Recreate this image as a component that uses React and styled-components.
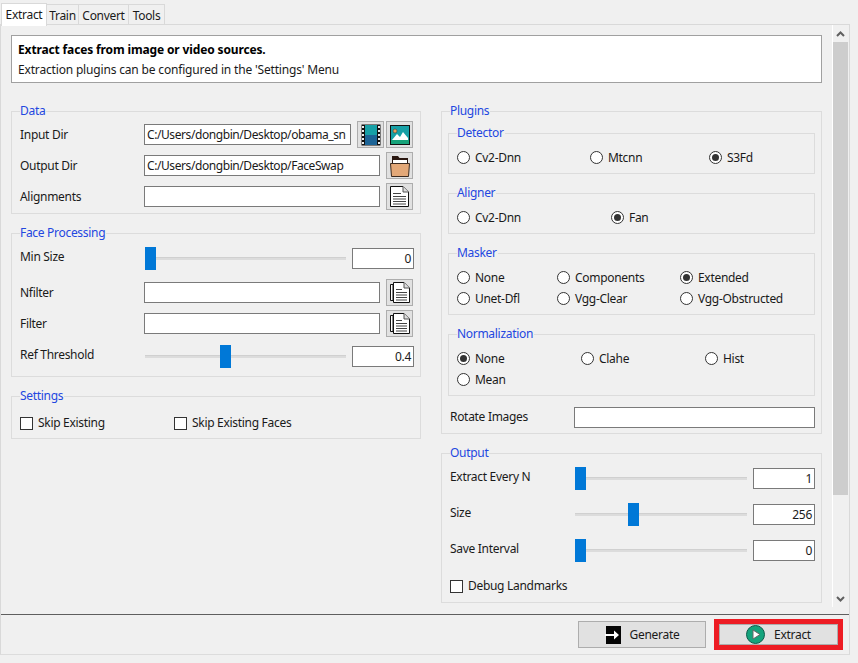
import React from 'react';
import styled, { createGlobalStyle } from 'styled-components';

const GlobalStyle = createGlobalStyle`
  html, body {
    margin: 0;
    padding: 0;
    background: #f0f0f0;
    overflow: hidden;
  }
  * {
    box-sizing: border-box;
  }
`;

const Window = styled.div`
  width: 858px;
  height: 663px;
  background: #f0f0f0;
  color: #1a1a1a;
  font-family: 'Noto Sans', 'Liberation Sans', sans-serif;
  font-size: 12px;
  letter-spacing: -0.3px;
  line-height: 16px;
  display: flex;
  flex-direction: column;
`;

const TabBar = styled.div`
  height: 25px;
  padding: 2px 0 0 1px;
  display: flex;
  align-items: flex-end;
  width: 850px;
  position: relative;
  z-index: 1;
`;

const Tab = styled.div`
  width: ${(p) => p.$width}px;
  height: ${(p) => (p.$active ? 23 : 21)}px;
  margin-bottom: ${(p) => (p.$active ? -1 : 0)}px;
  background: ${(p) => (p.$active ? '#fff' : '#f0f0f0')};
  border: 1px solid #d9d9d9;
  border-bottom: ${(p) => (p.$active ? 'none' : '1px solid #d9d9d9')};
  border-left: ${(p) => (p.$active ? '1px solid #d9d9d9' : 'none')};
  text-align: center;
  line-height: ${(p) => (p.$active ? 22 : 21)}px;
`;

const Pane = styled.div`
  width: 850px;
  height: 631px;
  margin-top: -1px;
  border: 1px solid #d9d9d9;
  border-bottom-color: #dcdcdc;
  display: flex;
  flex-direction: column;
`;

const ScrollArea = styled.div`
  height: 589px;
  display: flex;
`;

const Content = styled.div`
  width: 831px;
  padding: 10px 10px 0;
`;

const Description = styled.div`
  height: 48px;
  background: #fff;
  border: 1px solid #a0a0a0;
  padding: 4px 6px;
  line-height: 20px;
  letter-spacing: -0.17px;
`;

const DescriptionTitle = styled.div`
  font-weight: 700;
  color: #000;
  letter-spacing: -0.14px;
`;

const Columns = styled.div`
  margin-top: 28px;
  display: grid;
  grid-template-columns: 410px 381px;
  column-gap: 20px;
  align-items: start;
`;

const Column = styled.div`
  display: flex;
  flex-direction: column;
  gap: 19px;
`;

const Group = styled.div`
  border: 1px solid #dcdcdc;
  height: ${(p) => p.$height}px;
  padding: 0 ${(p) => p.$pr ?? 7}px 0 ${(p) => p.$pl ?? 8}px;
`;

const GroupTitle = styled.div`
  width: fit-content;
  margin: -9px 0 0 ${(p) => p.$ml ?? 0}px;
  height: 16px;
  background: #f0f0f0;
  color: #2347e0;
  line-height: 16px;
  padding-right: 1px;
`;

const SubGroups = styled.div`
  display: flex;
  flex-direction: column;
  gap: 19px;
  margin: 14px 0 0;
`;

const SubTitle = styled(GroupTitle)`
  margin-left: 8px;
`;

const Row = styled.div`
  display: flex;
  align-items: center;
  height: ${(p) => p.$height ?? 27}px;
  margin-top: ${(p) => p.$mt ?? 0}px;
`;

const Label = styled.div`
  width: 124px;
  flex: none;
  margin-top: ${(p) => p.$shift ?? 0}px;
  color: #1a1a1a;
`;

const RotateLabel = styled(Label)`
  width: 126px;
  padding-left: 2px;
`;

const TextField = styled.div`
  flex: 1;
  min-width: 0;
  height: 21px;
  background: #fff;
  border: 1px solid #7a7a7a;
  padding: 0 2px;
  line-height: 20px;
  letter-spacing: -0.42px;
  white-space: nowrap;
  overflow: hidden;
`;

const IconButton = styled.div`
  width: 27px;
  height: 27px;
  flex: none;
  margin-left: ${(p) => p.$ml ?? 6}px;
  background: #e1e1e1;
  border: 1px solid #adadad;
  display: flex;
  align-items: center;
  justify-content: center;
`;

const SliderBox = styled.div`
  flex: 1;
  min-width: 0;
  height: 23px;
  margin-left: 1px;
  position: relative;
`;

const SliderTrack = styled.div`
  position: absolute;
  left: 0;
  right: 0;
  top: 10px;
  height: 3px;
  background: #dcdcdc;
  border-top: 1px solid #d0d0d0;
`;

const SliderHandle = styled.div`
  position: absolute;
  top: 0;
  left: ${(p) => p.$pos}px;
  width: 11px;
  height: 23px;
  background: #0078d7;
`;

const SpinField = styled.div`
  width: 62px;
  height: 21px;
  flex: none;
  margin-left: 6px;
  margin-right: -1px;
  background: #fff;
  border: 1px solid #7a7a7a;
  padding-right: 2px;
  text-align: right;
  line-height: 20px;
`;

const OutputSpin = styled(SpinField)`
  margin-right: 0;
`;

const CheckLine = styled.div`
  display: flex;
  align-items: center;
  width: ${(p) => p.$width ?? 'auto'};
`;

const CheckBox = styled.span`
  width: 13px;
  height: 13px;
  flex: none;
  background: #fff;
  border: 1px solid #333;
  margin-right: 5px;
`;

const RadioGrid = styled.div`
  display: grid;
  grid-template-columns: ${(p) => p.$columns};
  grid-auto-rows: 21px;
  padding: 6px 0 0 8px;
`;

const RadioLine = styled.div`
  display: flex;
  align-items: center;
`;

const RadioDot = styled.span`
  width: 13px;
  height: 13px;
  flex: none;
  margin-right: 5px;
  border-radius: 50%;
  border: 1px solid #333;
  background: #fff;
  display: flex;
  align-items: center;
  justify-content: center;
  &::after {
    content: '';
    display: ${(p) => (p.$on ? 'block' : 'none')};
    width: 7px;
    height: 7px;
    border-radius: 50%;
    background: #333;
  }
`;

const Scrollbar = styled.div`
  width: 17px;
  flex: none;
  margin-bottom: 7px;
  padding-right: 1px;
  background: #f0f0f0;
  border-left: 1px solid #fff;
  display: flex;
  flex-direction: column;
  align-items: center;
`;

const ScrollArrow = styled.div`
  height: 17px;
  flex: none;
  display: flex;
  align-items: center;
  justify-content: center;
`;

const ScrollThumb = styled.div`
  width: 15px;
  height: 453px;
  flex: none;
  background: #cdcdcd;
`;

const ScrollRest = styled.div`
  flex: 1;
`;

const Footer = styled.div`
  flex: 1;
  border-top: 1px solid #5f5f5f;
  display: flex;
  align-items: center;
  justify-content: flex-end;
  padding: 0 6px 0 0;
`;

const FooterButton = styled.div`
  width: ${(p) => p.$width}px;
  height: ${(p) => p.$height}px;
  background: #e1e1e1;
  border: 1px solid #adadad;
  display: flex;
  align-items: center;
  justify-content: center;
  gap: ${(p) => p.$gap}px;
  color: #1a1a1a;
`;

const RedFrame = styled.div`
  margin-left: 8px;
  border: 5px solid #ed1c24;
  display: flex;
`;

const FilmIcon = () => (
  <svg width="20" height="22" viewBox="0 0 20 22">
    <rect x="0.5" y="0.5" width="19" height="21" fill="#111" />
    <rect x="4" y="1" width="12" height="10" fill="#17a0a6" />
    <rect x="4" y="11" width="12" height="10" fill="#1d6496" />
    {[2, 6, 10, 14, 18].map((y) => (
      <g key={y} fill="#eee">
        <rect x="1" y={y} width="2" height="2" />
        <rect x="17" y={y} width="2" height="2" />
      </g>
    ))}
  </svg>
);

const ImageIcon = () => (
  <svg width="20" height="20" viewBox="0 0 20 20">
    <rect x="0.5" y="0.5" width="19" height="19" fill="#17a0a6" stroke="#111" />
    <rect x="1" y="15" width="18" height="4" fill="#17a37a" />
    <circle cx="5" cy="6" r="2" fill="#e9a05c" stroke="#333" strokeWidth="0.5" />
    <path d="M2 15 L7 9 L10 12 L13 7 L18 13 L18 15 Z" fill="#fff" />
  </svg>
);

const FolderIcon = () => (
  <svg width="20" height="22" viewBox="0 0 20 22">
    <path d="M2 1 H8 L9.5 3 H18 V10 H2 Z" fill="#2a1710" />
    <rect x="3" y="5" width="14" height="3" fill="#fff" />
    <path d="M0.5 8.5 H19.5 L18.5 21.5 H1.5 Z" fill="#e3a878" stroke="#3a2a20" />
  </svg>
);

const FileIcon = () => (
  <svg width="19" height="21" viewBox="0 0 19 21">
    <path d="M0.5 0.5 H13 L18.5 6 V20.5 H0.5 Z" fill="#fff" stroke="#111" />
    <path d="M13 0.5 V6 H18.5" fill="#ddd" stroke="#555" />
    <path d="M3 7.5 H11 M3 10.5 H16 M3 13 H16 M3 15.5 H16 M3 18 H16" stroke="#444" />
  </svg>
);

const FilesIcon = () => (
  <svg width="20" height="21" viewBox="0 0 20 21">
    <path d="M0.5 2.5 H3 V18.5 H0.5 Z" fill="#fff" stroke="#111" />
    <path d="M3.5 0.5 H14 L19.5 6 V20.5 H3.5 Z" fill="#fff" stroke="#111" />
    <path d="M14 0.5 V6 H19.5" fill="#ddd" stroke="#555" />
    <path d="M6 7.5 H12 M6 10.5 H17 M6 13 H17 M6 15.5 H17 M6 18 H17" stroke="#444" />
  </svg>
);

const GenerateIcon = () => (
  <svg width="16" height="18" viewBox="0 0 16 18">
    <rect x="1" y="0" width="15" height="18" fill="#050505" />
    <path d="M0 8 H9 V4.5 L14 9 L9 13.5 V10 H0 Z" fill="#fff" />
  </svg>
);

const PlayIcon = () => (
  <svg width="19" height="19" viewBox="0 0 19 19">
    <circle cx="9.5" cy="9.5" r="9" fill="#14a37c" stroke="#0c5c4a" />
    <path d="M7 5 L14 9.5 L7 14 Z" fill="#fff" stroke="#666" />
  </svg>
);

const Chevron = ({ up }) => (
  <svg width="9" height="6" viewBox="0 0 9 6">
    <path
      d={up ? 'M1 5 L4.5 1.5 L8 5' : 'M1 1 L4.5 4.5 L8 1'}
      fill="none"
      stroke="#606060"
      strokeWidth="2"
    />
  </svg>
);

const Slider = ({ pos }) => (
  <SliderBox>
    <SliderTrack />
    <SliderHandle $pos={pos} />
  </SliderBox>
);

const Radio = ({ on, children }) => (
  <RadioLine>
    <RadioDot $on={on} />
    {children}
  </RadioLine>
);

const tabs = [
  { name: 'Extract', width: 46, active: true },
  { name: 'Train', width: 32 },
  { name: 'Convert', width: 50 },
  { name: 'Tools', width: 36 },
];

export default function App() {
  return (
    <Window>
      <GlobalStyle />
      <TabBar>
        {tabs.map((t) => (
          <Tab key={t.name} $width={t.width} $active={t.active}>
            {t.name}
          </Tab>
        ))}
      </TabBar>
      <Pane>
        <ScrollArea>
          <Content>
            <Description>
              <DescriptionTitle>Extract faces from image or video sources.</DescriptionTitle>
              Extraction plugins can be configured in the 'Settings' Menu
            </Description>
            <Columns>
              <Column>
                <Group $height={103}>
                  <GroupTitle>Data</GroupTitle>
                  <Row $mt={2}>
                    <Label>Input Dir</Label>
                    <TextField>C:/Users/dongbin/Desktop/obama_sn</TextField>
                    <IconButton><FilmIcon /></IconButton>
                    <IconButton $ml={2}><ImageIcon /></IconButton>
                  </Row>
                  <Row $mt={4}>
                    <Label>Output Dir</Label>
                    <TextField>C:/Users/dongbin/Desktop/FaceSwap</TextField>
                    <IconButton><FolderIcon /></IconButton>
                  </Row>
                  <Row $mt={4}>
                    <Label>Alignments</Label>
                    <TextField />
                    <IconButton><FileIcon /></IconButton>
                  </Row>
                </Group>
                <Group $height={144}>
                  <GroupTitle>Face Processing</GroupTitle>
                  <Row $height={23} $mt={6}>
                    <Label $shift={-4}>Min Size</Label>
                    <Slider pos={0} />
                    <SpinField>0</SpinField>
                  </Row>
                  <Row $mt={9}>
                    <Label>Nfilter</Label>
                    <TextField />
                    <IconButton><FilesIcon /></IconButton>
                  </Row>
                  <Row $mt={4}>
                    <Label>Filter</Label>
                    <TextField />
                    <IconButton><FilesIcon /></IconButton>
                  </Row>
                  <Row $height={23} $mt={8}>
                    <Label $shift={-4}>Ref Threshold</Label>
                    <Slider pos={75} />
                    <SpinField>0.4</SpinField>
                  </Row>
                </Group>
                <Group $height={43}>
                  <GroupTitle>Settings</GroupTitle>
                  <Row $height={16} $mt={11}>
                    <CheckLine $width="154px"><CheckBox />Skip Existing</CheckLine>
                    <CheckLine><CheckBox />Skip Existing Faces</CheckLine>
                  </Row>
                </Group>
              </Column>
              <Column>
                <Group $height={323} $pl={6} $pr={6}>
                  <GroupTitle $ml={2}>Plugins</GroupTitle>
                  <SubGroups>
                    <Group $height={41} $pl={0} $pr={0}>
                      <SubTitle>Detector</SubTitle>
                      <RadioGrid $columns="133px 119px 1fr">
                        <Radio>Cv2-Dnn</Radio>
                        <Radio>Mtcnn</Radio>
                        <Radio on>S3Fd</Radio>
                      </RadioGrid>
                    </Group>
                    <Group $height={41} $pl={0} $pr={0}>
                      <SubTitle>Aligner</SubTitle>
                      <RadioGrid $columns="154px 1fr">
                        <Radio>Cv2-Dnn</Radio>
                        <Radio on>Fan</Radio>
                      </RadioGrid>
                    </Group>
                    <Group $height={62} $pl={0} $pr={0}>
                      <SubTitle>Masker</SubTitle>
                      <RadioGrid $columns="100px 123px 1fr">
                        <Radio>None</Radio>
                        <Radio>Components</Radio>
                        <Radio on>Extended</Radio>
                        <Radio>Unet-Dfl</Radio>
                        <Radio>Vgg-Clear</Radio>
                        <Radio>Vgg-Obstructed</Radio>
                      </RadioGrid>
                    </Group>
                    <Group $height={62} $pl={0} $pr={0}>
                      <SubTitle>Normalization</SubTitle>
                      <RadioGrid $columns="124px 124px 1fr">
                        <Radio on>None</Radio>
                        <Radio>Clahe</Radio>
                        <Radio>Hist</Radio>
                        <Radio>Mean</Radio>
                      </RadioGrid>
                    </Group>
                  </SubGroups>
                  <Row $height={21} $mt={11}>
                    <RotateLabel $shift={-2}>Rotate Images</RotateLabel>
                    <TextField />
                  </Row>
                </Group>
                <Group $height={150} $pl={8} $pr={6}>
                  <GroupTitle>Output</GroupTitle>
                  <Row $height={23} $mt={6}>
                    <Label $shift={-4}>Extract Every N</Label>
                    <Slider pos={0} />
                    <OutputSpin>1</OutputSpin>
                  </Row>
                  <Row $height={23} $mt={13}>
                    <Label $shift={-4}>Size</Label>
                    <Slider pos={53} />
                    <OutputSpin>256</OutputSpin>
                  </Row>
                  <Row $height={23} $mt={13}>
                    <Label $shift={-4}>Save Interval</Label>
                    <Slider pos={0} />
                    <OutputSpin>0</OutputSpin>
                  </Row>
                  <Row $height={16} $mt={16}>
                    <CheckLine><CheckBox />Debug Landmarks</CheckLine>
                  </Row>
                </Group>
              </Column>
            </Columns>
          </Content>
          <Scrollbar>
            <ScrollArrow><Chevron up /></ScrollArrow>
            <ScrollThumb />
            <ScrollRest />
            <ScrollArrow><Chevron /></ScrollArrow>
          </Scrollbar>
        </ScrollArea>
        <Footer>
          <FooterButton $width={128} $height={27} $gap={9}>
            <GenerateIcon />
            Generate
          </FooterButton>
          <RedFrame>
            <FooterButton $width={119} $height={21} $gap={9}>
              <PlayIcon />
              Extract
            </FooterButton>
          </RedFrame>
        </Footer>
      </Pane>
    </Window>
  );
}
